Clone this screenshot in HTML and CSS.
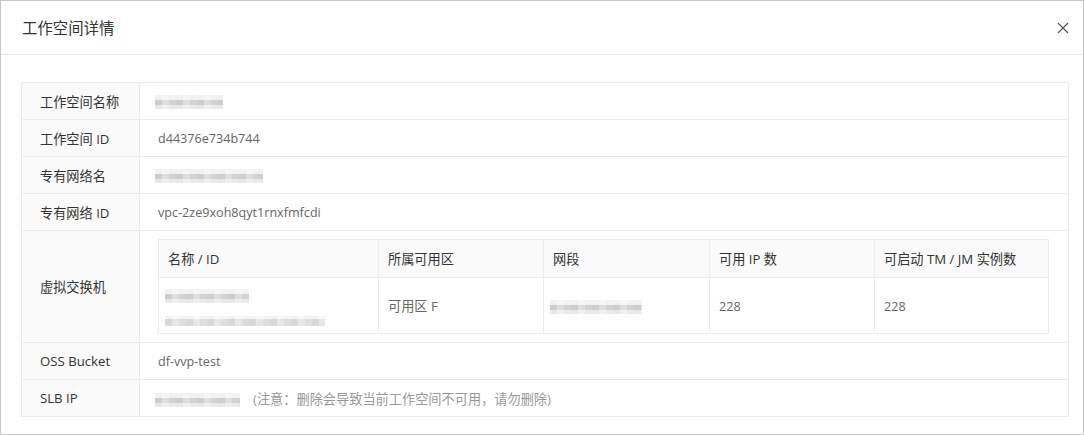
FILE: index.html
```html
<!DOCTYPE html>
<html lang="zh-CN">
<head>
    <meta charset="UTF-8">
    <title>工作空间详情</title>
    <link rel="stylesheet" href="styles.css">
</head>
<body>
    <div class="dialog">
        <div class="dialog-header">
            <span class="dialog-title">工作空间详情</span>
            <span class="close">
                <svg width="12" height="12" viewBox="0 0 12 12"><path d="M1 1L11 11M11 1L1 11" stroke="#555" stroke-width="1.2" fill="none"/></svg>
            </span>
        </div>
        <div class="dialog-body">
            <table class="detail-table">
                <tbody>
                    <tr>
                        <th>工作空间名称</th>
                        <td><span class="mosaic" style="width:68px"></span></td>
                    </tr>
                    <tr>
                        <th>工作空间 ID</th>
                        <td><span class="latin">d44376e734b744</span></td>
                    </tr>
                    <tr>
                        <th>专有网络名</th>
                        <td><span class="mosaic" style="width:108px"></span></td>
                    </tr>
                    <tr>
                        <th>专有网络 ID</th>
                        <td><span class="latin">vpc-2ze9xoh8qyt1rnxfmfcdi</span></td>
                    </tr>
                    <tr>
                        <th>虚拟交换机</th>
                        <td class="switch-cell">
                            <!-- 交换机列表 -->
                            <table class="switch-table">
                                <colgroup>
                                    <col style="width:220px">
                                    <col style="width:165px">
                                    <col style="width:166px">
                                    <col style="width:165px">
                                    <col>
                                </colgroup>
                                <thead>
                                    <tr>
                                        <th>名称 / ID</th>
                                        <th>所属可用区</th>
                                        <th>网段</th>
                                        <th>可用 IP 数</th>
                                        <th>可启动 TM / JM 实例数</th>
                                    </tr>
                                </thead>
                                <tbody>
                                    <tr>
                                        <td>
                                            <span class="mosaic" style="width:84px"></span><br>
                                            <span class="mosaic line2" style="width:160px"></span>
                                        </td>
                                        <td>可用区 F</td>
                                        <td><span class="mosaic" style="width:92px"></span></td>
                                        <td><span class="latin">228</span></td>
                                        <td><span class="latin">228</span></td>
                                    </tr>
                                </tbody>
                            </table>
                        </td>
                    </tr>
                    <tr>
                        <th>OSS Bucket</th>
                        <td><span class="latin">df-vvp-test</span></td>
                    </tr>
                    <tr>
                        <th>SLB IP</th>
                        <td><span class="mosaic" style="width:85px"></span><span class="note">(注意：删除会导致当前工作空间不可用，请勿删除)</span></td>
                    </tr>
                </tbody>
            </table>
        </div>
    </div>
</body>
</html>
```

FILE: styles.css
```css
body {
    margin: 0;
    font-family: "Open Sans", "Noto Sans CJK SC", sans-serif;
    font-size: 13.2px;
    color: #333;
    background: #fff;
}
.dialog {
    width: 1084px;
    height: 435px;
    box-sizing: border-box;
    border: 1px solid #c6c6c6;
}
.dialog-header {
    height: 53px;
    border-bottom: 1px solid #e8e8e8;
    padding: 0 14px 0 21px;
    display: flex;
    align-items: center;
    justify-content: space-between;
}
.dialog-title {
    font-size: 15.4px;
    color: #333;
}
.close {
    display: flex;
    cursor: pointer;
}
.dialog-body {
    padding: 27px 14px 0 20px;
}
/* 상세 테이블 */
.detail-table {
    width: 100%;
    border-collapse: collapse;
    border: 1px solid #ebebeb;
}
.detail-table > tbody > tr > th,
.detail-table > tbody > tr > td {
    border: 1px solid #ebebeb;
    height: 37px;
    padding: 0 19px 0 18px;
    text-align: left;
    font-weight: normal;
    box-sizing: border-box;
}
.detail-table > tbody > tr > th {
    width: 118px;
    background: #fafafa;
    color: #333;
    white-space: nowrap;
}
.detail-table > tbody > tr > td {
    color: #666;
}
.detail-table > tbody > tr > td.switch-cell {
    padding-top: 8px;
    padding-bottom: 8px;
}
.latin {
    font-size: 12.6px;
}
/* 교환기 테이블 */
.switch-table {
    width: 100%;
    border-collapse: collapse;
    table-layout: fixed;
}
.switch-table th,
.switch-table td {
    border: 1px solid #ebebeb;
    padding: 0 9px;
    text-align: left;
    font-weight: normal;
    box-sizing: border-box;
}
.switch-table th {
    height: 38px;
    background: #fafafa;
    color: #333;
}
.switch-table td {
    height: 56px;
    color: #666;
}
.mosaic {
    display: inline-block;
    height: 14px;
    vertical-align: middle;
    margin-left: -3px;
    background:
        repeating-linear-gradient(90deg, rgba(255,255,255,0) 0 7px, rgba(255,255,255,0.35) 7px 14px, rgba(255,255,255,0.1) 14px 21px),
        linear-gradient(#f1f1f1 0 5px, #cdcdcd 5px 10px, #e8e8e8 10px 14px);
}
.mosaic.line2 {
    margin-top: 12px;
    height: 10px;
    background:
        repeating-linear-gradient(90deg, rgba(255,255,255,0) 0 7px, rgba(255,255,255,0.4) 7px 14px, rgba(255,255,255,0.15) 14px 21px),
        linear-gradient(#f3f3f3 0 3px, #d8d8d8 3px 10px);
}
.note {
    margin-left: 13px;
    color: #999;
}
```
